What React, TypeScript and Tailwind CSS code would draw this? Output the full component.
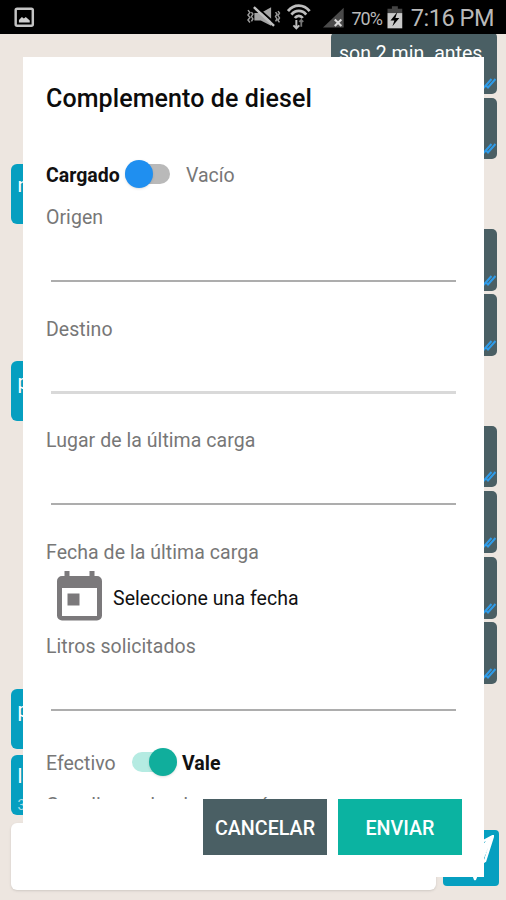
import type { ReactNode } from "react"

type Message = {
    side: "in" | "out"
    text: string
    time?: string
}

const messages: Message[] = [
    { side: "out", text: "son 2 min. antes" },
    { side: "out", text: "" },
    { side: "in", text: "no" },
    { side: "out", text: "" },
    { side: "out", text: "" },
    { side: "in", text: "para" },
    { side: "out", text: "" },
    { side: "out", text: "" },
    { side: "out", text: "" },
    { side: "out", text: "" },
    { side: "in", text: "para" },
    { side: "in", text: "la", time: "3:10" },
]

function StatusBar() {
    return (
        <div className="flex h-[34px] shrink-0 items-center bg-black pl-[14px] pr-[12px] text-[#b9b9b9]">
            <svg width="21" height="21" viewBox="0 0 21 21" fill="none">
                <rect x="1.7" y="1.7" width="17.4" height="17.2" rx="1.5" stroke="#c4c4c4" strokeWidth="2.5" />
                <path d="M5 15.500v-2.500l3-3 2 1.500 2-1.500 4 3.500v2z" fill="#d0d0d0" />
            </svg>
            <svg className="ml-[211px]" width="36" height="24" viewBox="0 0 36 24" fill="none">
                <path d="M2 5l2 2.500-2 2.500 2 2.500-2 2.500 2 2.500M5.500 7l1.500 2-1.500 2.500 1.500 2.500-1.500 2.500M30 7l1.500 2-1.500 2.500 1.500 2.500-1.500 2.500M32.500 6l1.500 2-1.500 2.500 1.500 2.500-1.500 2.500 1.500 2" stroke="#999" strokeWidth="1.500" />
                <path d="M8.500 8H15l10.500-6v19L15 15.500H8.500z" fill="#a4a4a4" />
                <path d="M10.500 1.500l19.500 17.500" stroke="#000" strokeWidth="2" />
                <path d="M8 2l20.500 19" stroke="#c0c0c0" strokeWidth="2.500" />
            </svg>
            <svg className="ml-[6px]" width="24" height="26" viewBox="0 0 24 26" fill="none" stroke="#bdbdbd" strokeWidth="2.800">
                <path d="M1 7C7-.5 17-.5 23 7M4.500 10.500c4-5 11-5 15 0M8 14c2.200-3 5.800-3 8 0" />
                <path d="M9.500 16v8M6.500 21.500l3 3 3-3" strokeWidth="2" />
                <path d="M14.500 23v-7M12.500 18l2-2 2 2" stroke="#777" strokeWidth="1.800" />
            </svg>
            <svg className="ml-[12px] mt-[1px]" width="22" height="22" viewBox="0 0 23 22" fill="none">
                <path d="M0 21L22 0v21z" fill="#4a4a4a" />
                <path d="M12.500 12.500l7 7M19.500 12.500l-7 7" stroke="#d8d8d8" strokeWidth="2.200" />
            </svg>
            <span className="ml-[7px] mt-[3px] w-[34px] whitespace-nowrap text-[18px] leading-none tracking-[-0.900px]">70%</span>
            <svg className="ml-[2px] mt-[1px]" width="16" height="23" viewBox="0 0 16 23">
                <path d="M5 0h6v2.500h4.500V7H.5V2.500H5z" fill="#444" />
                <path d="M.5 7h15v15.500H.5z" fill="#c9c9c9" />
                <path d="M10.500 6L3.500 14.500h4l-2 6 7-8.500h-4z" fill="#000" />
            </svg>
            <span className="ml-[8px] mt-[4px] whitespace-nowrap text-[23.500px] leading-none tracking-[-0.450px]">7:16 PM</span>
        </div>
    )
}

function DoubleCheck() {
    return (
        <svg className="absolute bottom-[5px] right-[1px]" width="14" height="12" viewBox="0 0 14 12" fill="none" stroke="#2f9be8" strokeWidth="2">
            <path d="M0 7.500L2 10.500 9.500 2M4.500 9L6 10.500 13.500 2" />
        </svg>
    )
}

function Bubble({ message }: { message: Message }) {
    if (message.side === "out") {
        return (
            <div className="relative -mt-px h-[61.800px] w-[166px] shrink-0 self-end rounded-[5px] bg-[#4a5f64] px-[8px] pt-[10px] text-[19.500px] leading-[24px] text-white">
                {message.text}
                <DoubleCheck />
            </div>
        )
    }
    return (
        <div className="flex h-[60px] w-[160px] shrink-0 flex-col justify-between self-start rounded-[6px] bg-[#069fc0] px-[7px] pb-[2px] pt-[9px] text-[20px] leading-[24px] text-white">
            <span>{message.text}</span>
            <span className="text-[14px] leading-[16px] text-[#a5dce8]">{message.time}</span>
        </div>
    )
}

function Chat() {
    return (
        <div className="flex min-h-0 flex-1 flex-col overflow-hidden bg-[#ede6e0]">
            <div className="-mt-px flex h-[790px] shrink-0 flex-col pl-[10.500px] pr-[9px]">
                {messages.map((message, i) => (
                    <div key={i} className="flex h-[65.600px] shrink-0 flex-col">
                        <Bubble message={message} />
                    </div>
                ))}
            </div>
            <div className="flex items-start gap-[7px] pl-[11px]">
                <div className="h-[67px] w-[425px] rounded-[6px] bg-white shadow-sm" />
                <div className="mt-[7px] flex h-[56px] w-[56px] items-center justify-center rounded-[4px] bg-[#069fc0]">
                    <svg width="46" height="46" viewBox="0 0 46 46" fill="none" stroke="#fff" strokeWidth="2.500" strokeLinejoin="round">
                        <path d="M45 1L2 24l14 6zM45 1L37 26l-11 7zM45 1L22 30l5 14 6-15" />
                        <path d="M45 1L36 22l-5 10 2-14z" fill="#fff" strokeWidth="1" />
                    </svg>
                </div>
            </div>
        </div>
    )
}

function Field({ label, thick }: { label: string; thick?: boolean }) {
    return (
        <div className="h-[111.700px] shrink-0">
            <div className="h-[25px] pt-px text-[19.500px] leading-[24px] tracking-[0.050px] text-[#777]">{label}</div>
            <div
                className={
                    thick
                        ? "ml-[5px] h-[52px] w-[405px] border-b-[3px] border-[#d9d9d9]"
                        : "ml-[5px] h-[52px] w-[405px] border-b-2 border-[#adadad]"
                }
            />
        </div>
    )
}

function Row({ children, className }: { children: ReactNode; className: string }) {
    return <div className={`flex shrink-0 items-center whitespace-nowrap text-[19.500px] ${className}`}>{children}</div>
}

function Dialog() {
    return (
        <div className="absolute left-[23px] top-[57px] flex h-[820px] w-[461px] flex-col bg-white">
            <div className="flex h-[742px] flex-col overflow-hidden px-[23px]">
                <h2 className="mt-[27px] h-[30px] shrink-0 whitespace-nowrap text-[25px] font-medium leading-[30px] tracking-[0.100px] text-[#0c0c0c]">
                    Complemento de diesel
                </h2>

                <Row className="mt-[45px] h-[30px]">
                    <span className="mt-[3px] w-[79px] font-bold text-[#111]">Cargado</span>
                    <div className="flex h-[20px] w-[45px] items-center rounded-full bg-[#b9b9b9]">
                        <div className="h-[28px] w-[28px] shrink-0 rounded-full bg-[#1f8ff0] shadow-sm" />
                    </div>
                    <span className="ml-[16px] mt-[3px] text-[#777]">Vacío</span>
                </Row>

                <div className="mt-[16px] flex shrink-0 flex-col">
                    <Field label="Origen" />
                    <Field label="Destino" thick />
                    <Field label="Lugar de la última carga" />
                </div>

                <div className="h-[24px] shrink-0 pt-px text-[19.500px] leading-[24px] tracking-[0.050px] text-[#777]">
                    Fecha de la última carga
                </div>
                <Row className="h-[70px] pl-[11px]">
                    <svg className="-mt-[6px]" width="45" height="50" viewBox="0 0 45 50">
                        <path
                            fillRule="evenodd"
                            d="M7.500 0h5v5h20V0h5v5H40a5 5 0 0 1 5 5v34.500a5 5 0 0 1-5 5H5a5 5 0 0 1-5-5V10a5 5 0 0 1 5-5h2.500zM5 17v28h35V17z"
                            fill="#7b797b"
                        />
                        <path d="M10.500 22.500h12v12h-12z" fill="#7b797b" />
                    </svg>
                    <span className="ml-[11px] tracking-[0.050px] text-[#111]">Seleccione una fecha</span>
                </Row>
                <div className="flex shrink-0 flex-col">
                    <Field label="Litros solicitados" />
                </div>

                <Row className="mt-[1px] h-[30px]">
                    <span className="mt-[3px] w-[86px] text-[#777]">Efectivo</span>
                    <div className="flex h-[20px] w-[45px] items-center justify-end rounded-full bg-[#b5ebe2]">
                        <div className="h-[28px] w-[28px] shrink-0 rounded-full bg-[#10ae9c] shadow" />
                    </div>
                    <span className="ml-[5px] mt-[3px] font-bold text-[#111]">Vale</span>
                </Row>

                <div className="mt-[17px] h-[24px] shrink-0 whitespace-nowrap text-[19.500px] leading-[24px] tracking-[0.050px] text-[#777]">
                    Gasolinera donde cargará
                </div>
            </div>

            <div className="flex h-[56px] shrink-0 justify-end gap-[11px] pr-[22px] text-[19.700px] font-medium text-white">
                <button className="w-[124px] bg-[#4a5f64] pt-[3px]">CANCELAR</button>
                <button className="w-[124px] bg-[#0bb3a1] pt-[3px]">ENVIAR</button>
            </div>
        </div>
    )
}

export default function App() {
    return (
        <div className="relative flex h-[900px] w-[506px] flex-col overflow-hidden font-['Roboto',sans-serif]">
            <StatusBar />
            <Chat />
            <Dialog />
        </div>
    )
}
